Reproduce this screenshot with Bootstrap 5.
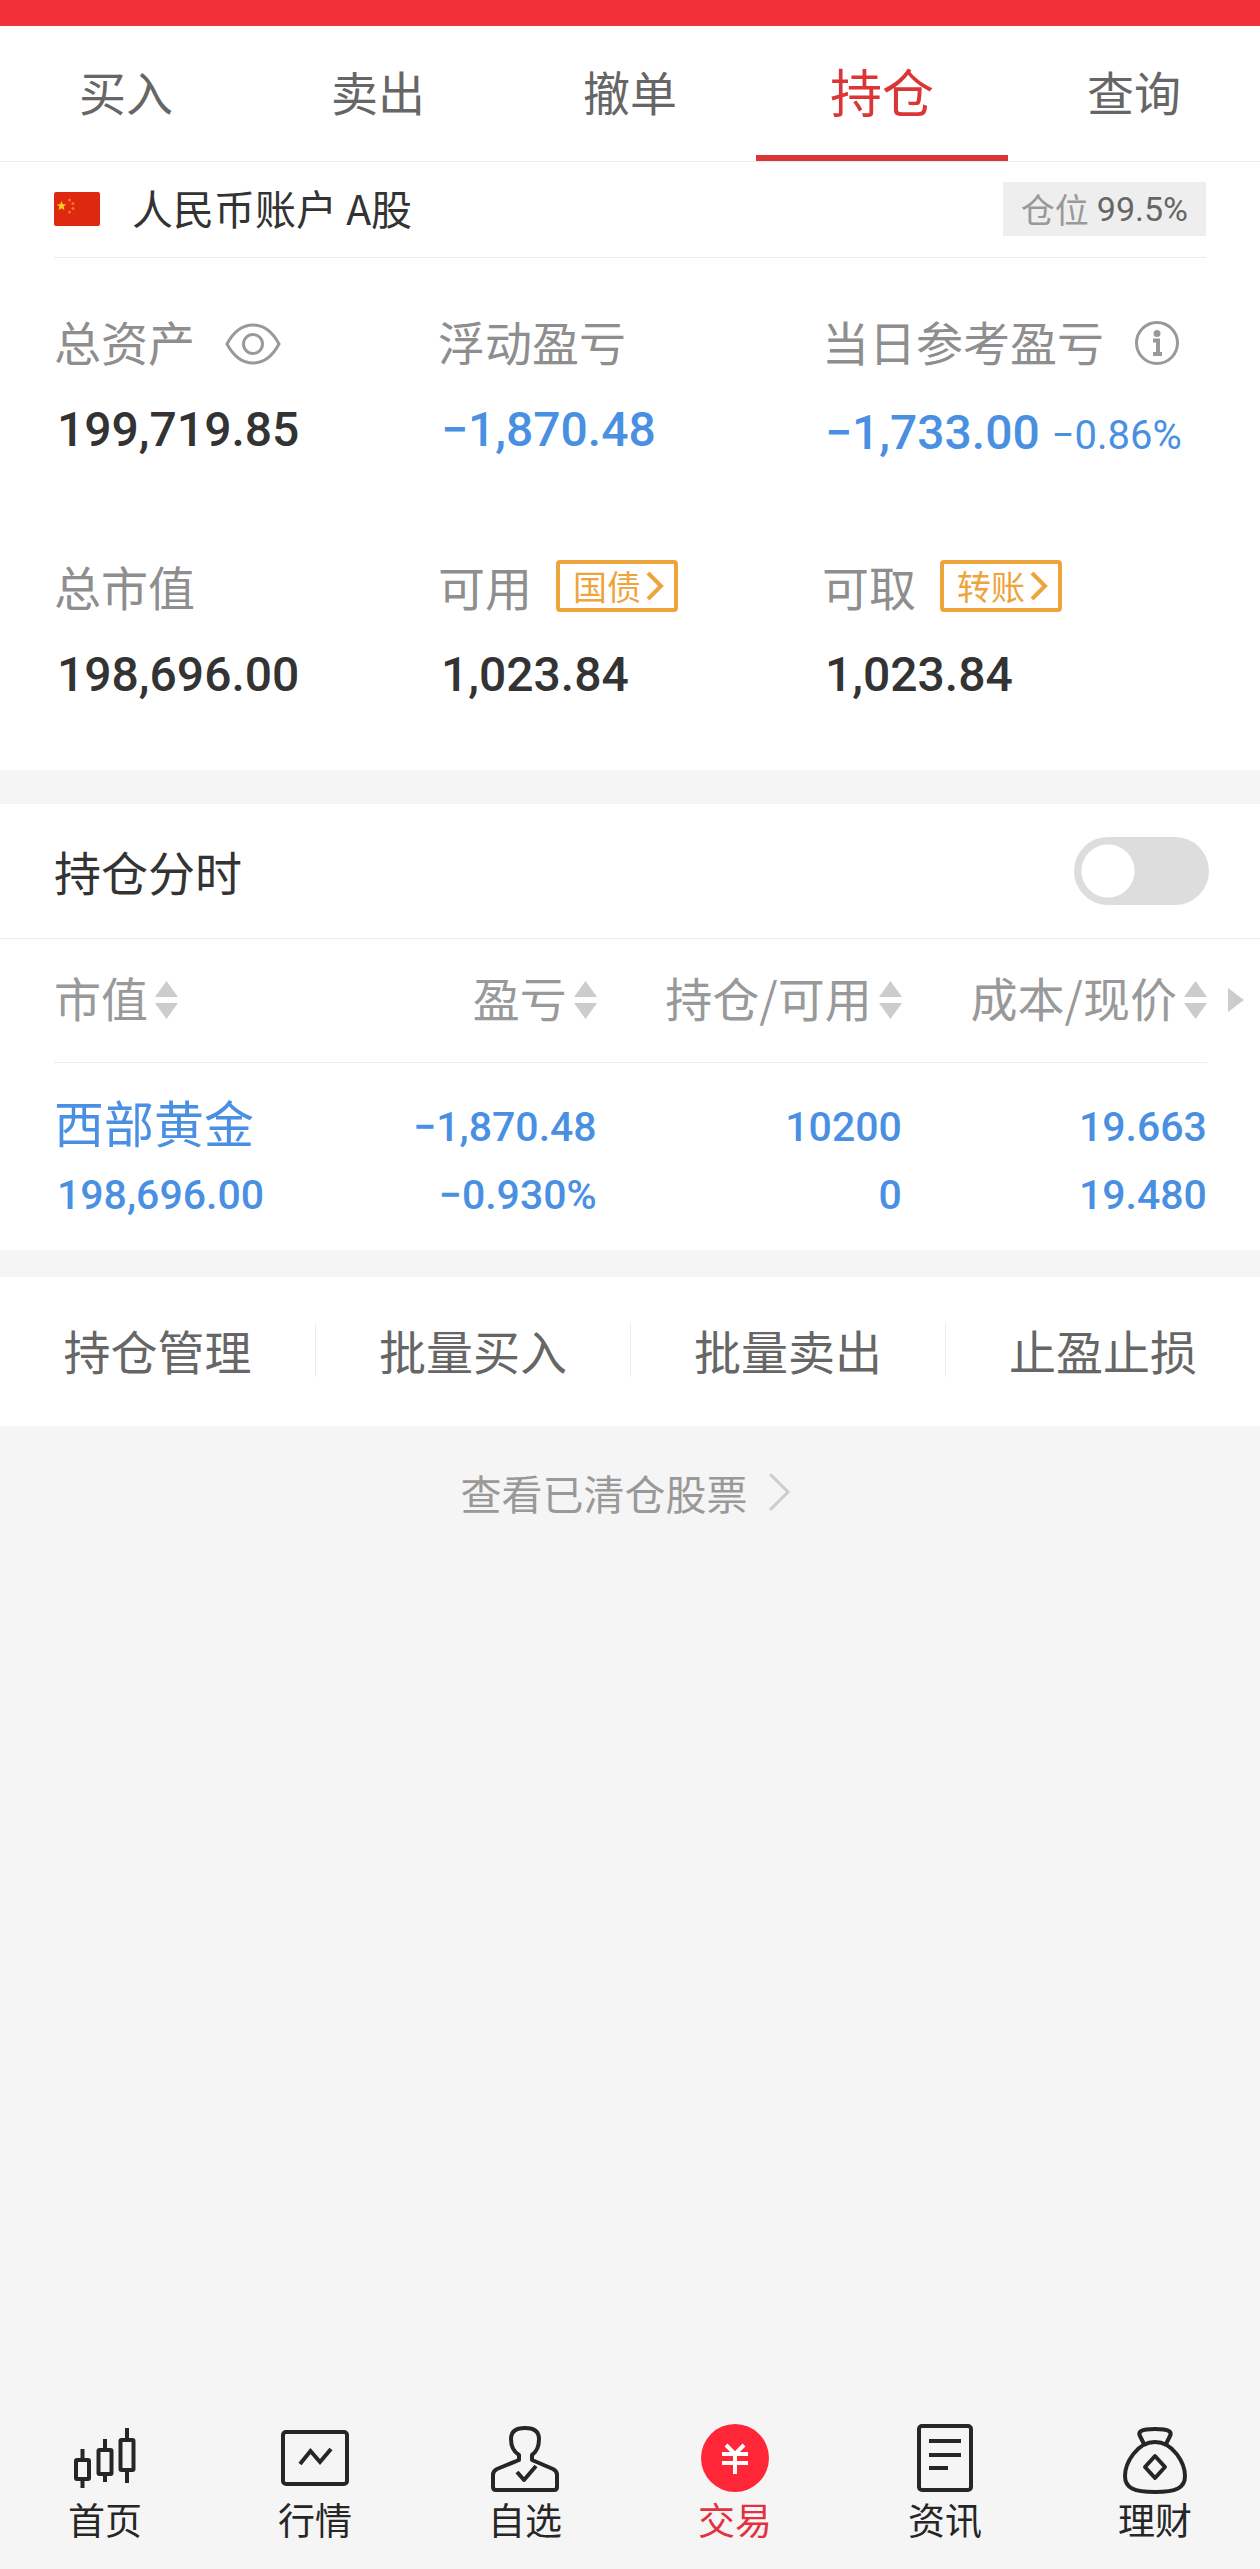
<!DOCTYPE html>
<html lang="zh-CN">
<head>
<meta charset="utf-8">
<meta name="viewport" content="width=device-width, initial-scale=1">
<title>持仓</title>
<link href="https://cdn.jsdelivr.net/npm/bootstrap@5.3.0/dist/css/bootstrap.min.css" rel="stylesheet">
<style>
  body { background: #f5f5f5; color: #333; font-family: "Noto Sans CJK SC", sans-serif; font-size: 47px; line-height: 56px; }
  a { color: inherit; text-decoration: none; }
  svg { display: block; flex: none; }
  .figure-num { font-family: Roboto, "Noto Sans CJK SC", sans-serif; font-weight: 500; }
  .status-strip { height: 26px; background: #f23038; }
  .hairline { border-bottom: 1px solid #ececec; }
  .inset { margin-left: 54px; margin-right: 54px; }

  .trade-tabs .nav-link { color: #666; padding: 37px 0 36px; border: 0; border-bottom: 6px solid transparent; border-radius: 0; line-height: 56px; }
  .trade-tabs .nav-link.active { color: #db3535; font-size: 52px; border-color: #db3535; background: none; }

  .account-bar { padding: 20px 0 21px; }
  .account-name { font-size: 41px; line-height: 50px; gap: 32px; }
  .account-name svg { margin-top: 4px; }
  .ratio-tag { background: #eee; color: #999; font-size: 34px; line-height: 54px; padding: 0 18px; gap: 8px; }
  .ratio-tag .figure-num { color: #666; font-weight: 400; }

  .summary { padding: 55px 0 67px; }
  .summary-top { margin-bottom: 94px; }
  .stat-label { color: #8e8e8e; margin-bottom: 33px; white-space: nowrap; }
  .label-icon { margin-top: 6px; margin-left: 30px; }
  .stat-value { font-size: 48px; padding-left: 3px; white-space: nowrap; }
  .stat-value.paired { line-height: 62px; }
  .stat-value .rate { font-size: 40px; line-height: 40px; font-weight: 400; }
  .fall { color: #4a90e2; }
  .tag-btn { border: 4px solid #eea43c; border-radius: 4px; color: #eea43c; background: #fff; font-size: 34px; line-height: 44px; height: 52px; padding: 0 10px 0 13px; gap: 5px; }

  .section-gap { margin-top: 34px; }
  .switch-row { padding: 33px 51px 33px 54px; }
  .switch-row .form-check-input, .switch-row .form-check-input:focus { width: 135px; height: 68px; margin: 0; border: 0; border-radius: 34px; background: #ddd radial-gradient(circle at 34px 34px, #fff 26px, transparent 27px) no-repeat; box-shadow: none; }

  .holdings { margin-left: 54px; }
  .holdings table { table-layout: fixed; width: 100%; }
  .holdings th, .holdings td { padding: 0; white-space: nowrap; }
  .holdings th { color: #999; font-weight: 400; }
  .holdings thead th { height: 123px; padding: 30px 0 36px; vertical-align: top; }
  .holdings thead th:not(.more-cell) { border-bottom: 1px solid #ececec; }
  .holdings .sort-btn { color: inherit; background: none; border: 0; padding: 0; gap: 7px; }
  .sort-btn svg, .more-cell svg { margin-top: 6px; }
  .more-cell { padding-left: 21px !important; }
  .more-cell div { height: 56px; }
  .col-value { width: 21%; } .col-gain { width: 24%; } .col-lot { width: 25.3%; }
  .holdings tbody td, .holdings tbody th { color: #4a90e2; padding: 36px 0 27px; vertical-align: bottom; }
  .holdings tbody th { padding-top: 20px; }
  .holdings tbody .figure-num { font-size: 41px; }
  .holdings tbody th .figure-num { padding-left: 3px; }
  .holdings tbody .figure-num + .figure-num { margin-top: 12px; }
  .stock-name { font-size: 50px; margin-bottom: 18px; }

  .actions { margin-top: 27px; padding: 46px 0 49px; }
  .actions .btn { font-size: 47px; line-height: 54px; color: #666; padding: 0; border: 0; border-radius: 0; white-space: nowrap; }
  .actions .btn + .btn { border-left: 1px solid #ececec; }
  .cleared { color: #999; font-size: 41px; line-height: 48px; padding-top: 42px; gap: 20px; }
  .bottom-nav { padding-bottom: 27px; color: #262626; font-size: 37px; line-height: 46px; }
  .bottom-nav a.current { color: #e5303f; }
  .bottom-nav svg { fill: none; stroke: #262626; stroke-width: 4; margin-bottom: 2px; }
</style>
<script src="https://cdn.jsdelivr.net/npm/bootstrap@5.3.0/dist/js/bootstrap.bundle.min.js"></script>
</head>
<body class="d-flex flex-column min-vh-100">
<svg width="0" height="0" class="position-absolute" aria-hidden="true">
  <symbol id="sort" viewBox="0 0 23 38"><path d="M11.500 0 23 16H0zM0 22h23L11.500 38z" fill="#ccc"/></symbol>
</svg>

<header class="bg-white">
  <div class="status-strip"></div>
  <nav class="trade-tabs nav nav-fill hairline flex-nowrap row-cols-5">
    <a class="nav-link" href="#">买入</a>
    <a class="nav-link" href="#">卖出</a>
    <a class="nav-link" href="#">撤单</a>
    <a class="nav-link active" aria-current="page" href="#">持仓</a>
    <a class="nav-link" href="#">查询</a>
  </nav>
</header>

<main>
  <section class="bg-white">
    <div class="inset">
      <div class="account-bar hairline d-flex justify-content-between align-items-start">
        <div class="account-name d-flex align-items-center">
          <svg width="46" height="34" viewBox="0 0 46 34"><rect width="46" height="34" rx="2" fill="#de2910"/><path d="M7.500 9l1.300 3.200 3.400.2-2.600 2.200.8 3.400-2.900-1.800-2.900 1.800.8-3.400-2.600-2.200 3.400-.2z" fill="#ffce1f"/><g fill="#f4742a"><circle cx="15.500" cy="8" r="1.500"/><circle cx="19" cy="11.500" r="1.500"/><circle cx="19" cy="16.500" r="1.500"/><circle cx="15.500" cy="20" r="1.500"/></g></svg>
          <span>人民币账户 A股</span>
        </div>
        <div class="ratio-tag d-flex"><span>仓位</span><span class="figure-num">99.5%</span></div>
      </div>
      <div class="summary">
        <div class="summary-top row g-0">
          <div class="col-4">
            <div class="stat-label d-flex align-items-center">总资产
              <svg class="label-icon" width="56" height="42" viewBox="0 0 56 42" fill="none" stroke="#999" stroke-width="3"><path d="M2 21C9 8 18 2 28 2s19 6 26 19C47 34 38 40 28 40S9 34 2 21z"/><circle cx="28" cy="21" r="9.500"/></svg>
            </div>
            <div class="stat-value figure-num">199,719.85</div>
          </div>
          <div class="col-4">
            <div class="stat-label">浮动盈亏</div>
            <div class="stat-value figure-num fall">−1,870.48</div>
          </div>
          <div class="col-4">
            <div class="stat-label d-flex align-items-center">当日参考盈亏
              <svg class="label-icon" width="46" height="46" viewBox="-1 1 46 46" fill="none" stroke="#999" stroke-width="3"><circle cx="22" cy="23" r="20.500"/><circle cx="22" cy="13.500" r="3.500" fill="#999" stroke="none"/><path d="M18 20.500h5V34M18 34h9" stroke-width="4"/></svg>
            </div>
            <div class="stat-value paired figure-num fall">−1,733.00 <span class="rate">−0.86%</span></div>
          </div>
        </div>
        <div class="row g-0">
          <div class="col-4">
            <div class="stat-label">总市值</div>
            <div class="stat-value figure-num">198,696.00</div>
          </div>
          <div class="col-4">
            <div class="stat-label d-flex align-items-center">可用
              <button type="button" class="tag-btn d-flex align-items-center ms-4">国债<svg width="18" height="30" viewBox="0 0 18 30" fill="none" stroke="#eea43c" stroke-width="4"><path d="M2 2l13 13L2 28"/></svg></button>
            </div>
            <div class="stat-value figure-num">1,023.84</div>
          </div>
          <div class="col-4">
            <div class="stat-label d-flex align-items-center">可取
              <button type="button" class="tag-btn d-flex align-items-center ms-4">转账<svg width="18" height="30" viewBox="0 0 18 30" fill="none" stroke="#eea43c" stroke-width="4"><path d="M2 2l13 13L2 28"/></svg></button>
            </div>
            <div class="stat-value figure-num">1,023.84</div>
          </div>
        </div>
      </div>
    </div>
  </section>

  <section class="section-gap bg-white">
    <div class="switch-row hairline form-switch d-flex justify-content-between align-items-center">
      <label for="minuteChart">持仓分时</label>
      <input class="form-check-input" type="checkbox" role="switch" id="minuteChart">
    </div>
    <div class="holdings">
      <table>
        <colgroup><col class="col-value"><col class="col-gain"><col class="col-lot"><col class="col-lot"><col></colgroup>
        <thead>
          <tr>
            <th><button type="button" class="sort-btn d-flex align-items-center">市值<svg width="23" height="38"><use href="#sort"/></svg></button></th>
            <th><button type="button" class="sort-btn d-flex align-items-center ms-auto">盈亏<svg width="23" height="38"><use href="#sort"/></svg></button></th>
            <th><button type="button" class="sort-btn d-flex align-items-center ms-auto">持仓/可用<svg width="23" height="38"><use href="#sort"/></svg></button></th>
            <th><button type="button" class="sort-btn d-flex align-items-center ms-auto">成本/现价<svg width="23" height="38"><use href="#sort"/></svg></button></th>
            <th class="more-cell"><div class="d-flex align-items-center"><svg width="16" height="24" viewBox="0 0 16 24"><path d="M0 0l16 12L0 24z" fill="#ccc"/></svg></div></th>
          </tr>
        </thead>
        <tbody>
          <tr>
            <th><div class="stock-name">西部黄金</div><div class="figure-num">198,696.00</div></th>
            <td class="text-end"><div class="figure-num">−1,870.48</div><div class="figure-num">−0.930%</div></td>
            <td class="text-end"><div class="figure-num">10200</div><div class="figure-num">0</div></td>
            <td class="text-end"><div class="figure-num">19.663</div><div class="figure-num">19.480</div></td>
            <td></td>
          </tr>
        </tbody>
      </table>
    </div>
  </section>

  <section class="actions bg-white d-flex row-cols-4">
    <button type="button" class="btn">持仓管理</button>
    <button type="button" class="btn">批量买入</button>
    <button type="button" class="btn">批量卖出</button>
    <button type="button" class="btn">止盈止损</button>
  </section>

  <a href="#" class="cleared d-flex justify-content-center align-items-center pe-2">查看已清仓股票<svg width="24" height="38" viewBox="0 0 24 38" fill="none" stroke="#ccc" stroke-width="3" stroke-linecap="round"><path d="M3 2l17 17L3 36"/></svg></a>
</main>

<nav class="bottom-nav mt-auto d-flex row-cols-6">
  <a href="#" class="d-flex flex-column align-items-center">
    <svg width="72" height="72" viewBox="0 0 72 72"><rect x="7" y="38" width="13" height="19" rx="1"/><path d="M13.500 27v10M13.500 58v8M36 17v10M36 53v7M58 6v11M58 49v12"/><rect x="29.500" y="28" width="13" height="24" rx="1"/><rect x="51.500" y="18" width="13" height="30" rx="1"/></svg>
    首页</a>
  <a href="#" class="d-flex flex-column align-items-center">
    <svg width="72" height="72" viewBox="0 0 72 72"><rect x="4" y="10" width="64" height="52" rx="3"/><path d="M21 42l10.500-13L41 40l11-13"/></svg>
    行情</a>
  <a href="#" class="d-flex flex-column align-items-center">
    <svg width="72" height="72" viewBox="0 0 72 72" stroke-linejoin="round"><path d="M30 33v5L8 47q-4 2-4 6v12q0 3 3 3h58q3 0 3-3V53q0-4-4-6L43 38v-5q7-5 7-16Q50 6 36 6T22 17q0 11 8 16z"/><path d="M28 50l7 8 12-14"/></svg>
    自选</a>
  <a href="#" class="current d-flex flex-column align-items-center">
    <svg width="72" height="72" viewBox="0 0 72 72"><circle cx="36" cy="36" r="34" fill="#ff2638" stroke="none"/><path d="M27 23l9 9 9-9M23 32h26M23 41h26M36 31v21" stroke="#fff"/></svg>
    交易</a>
  <a href="#" class="d-flex flex-column align-items-center">
    <svg width="72" height="72" viewBox="0 0 72 72"><rect x="10" y="4" width="52" height="64" rx="3"/><path d="M20 19h32M20 33h32M20 46h19"/></svg>
    资讯</a>
  <a href="#" class="d-flex flex-column align-items-center">
    <svg width="72" height="72" viewBox="0 0 72 72" stroke-linejoin="round"><path d="M36 20C18 20 6 41 6 54c0 12 9 16 30 16s30-4 30-16c0-13-12-34-30-34z"/><path d="M25 22l-4-8c-2-4 0-7 15-7s17 3 15 7l-4 8M36 34l10 11-10 11-10-11z"/></svg>
    理财</a>
</nav>
</body>
</html>
